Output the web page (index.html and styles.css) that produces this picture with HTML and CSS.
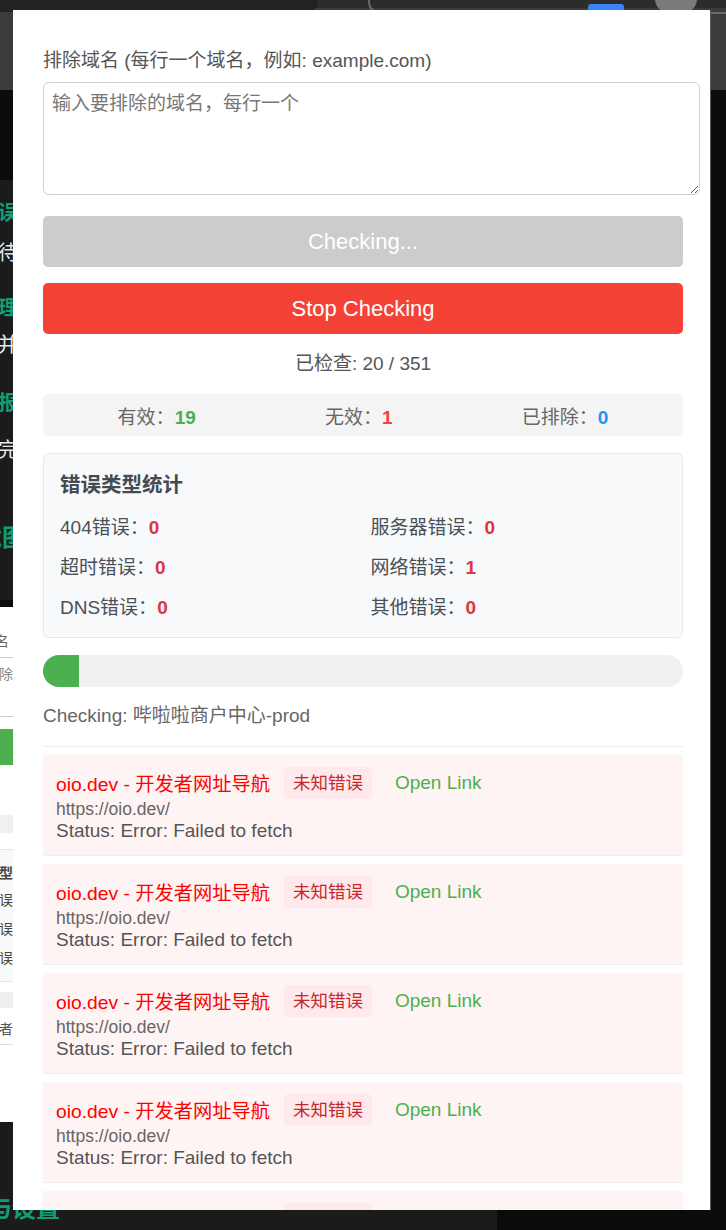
FILE: index.html
```html
<!DOCTYPE html>
<html lang="zh-CN">
<head>
<meta charset="utf-8">
<title>Link Checker</title>
<link rel="stylesheet" href="styles.css">
</head>
<body>
<div class="desktop">
  <div class="chrome-top">
    <div class="tab-dark"></div>
    <div class="omnibox"><span class="omni-btn"></span></div>
    <div class="avatar"></div>
  </div>

  <div class="doc-behind">
    <div class="doc-line h green l1">错误类型</div>
    <div class="doc-line white l2">等待检查</div>
    <div class="doc-line h green l3">处理方式</div>
    <div class="doc-line white l4">，并且</div>
    <div class="doc-line h green l5">误报说明</div>
    <div class="doc-line white l6">。完成</div>
    <div class="doc-line h big green l7">截图</div>
  </div>

  <div class="panel-behind">
    <div class="pb-label">排除域名</div>
    <div class="pb-input">输入要排除</div>
    <div class="pb-btn"></div>
    <div class="pb-gap"></div>
    <div class="pb-bar"></div>
    <div class="pb-box">
      <div class="pb-title">错误类型</div>
      <div class="pb-row">404错误</div>
      <div class="pb-row">超时错误</div>
      <div class="pb-row">DNS错误</div>
    </div>
    <div class="pb-bar2"></div>
    <div class="pb-item">oio.dev - 开发者</div>
  </div>

  <div class="doc-bottom">
    <div class="doc-line h big green">与设置</div>
  </div>
  <div class="bottom-right"></div>

  <div class="popup">
    <label class="field-label">排除域名 (每行一个域名，例如: example.com)</label>
    <textarea class="exclude-input" placeholder="输入要排除的域名，每行一个"></textarea>

    <button class="btn btn-disabled">Checking...</button>
    <button class="btn btn-stop">Stop Checking</button>

    <div class="progress-count">已检查: 20 / 351</div>

    <div class="summary">
      <div class="summary-item">有效：<span class="num num-valid">19</span></div>
      <div class="summary-item">无效：<span class="num num-invalid">1</span></div>
      <div class="summary-item">已排除：<span class="num num-excluded">0</span></div>
    </div>

    <div class="error-stats">
      <div class="error-title">错误类型统计</div>
      <div class="error-grid">
        <div class="error-cell">404错误：<span class="err-num">0</span></div>
        <div class="error-cell">服务器错误：<span class="err-num">0</span></div>
        <div class="error-cell">超时错误：<span class="err-num">0</span></div>
        <div class="error-cell">网络错误：<span class="err-num">1</span></div>
        <div class="error-cell">DNS错误：<span class="err-num">0</span></div>
        <div class="error-cell">其他错误：<span class="err-num">0</span></div>
      </div>
    </div>

    <div class="progress-track"><div class="progress-fill" style="width:36px"></div></div>

    <div class="current">Checking: 哔啦啦商户中心-prod</div>

    <div class="results">
      <div class="result-item">
        <div class="result-head">
          <span class="result-title">oio.dev - 开发者网址导航</span>
          <span class="badge">未知错误</span>
          <a class="open-link" href="#">Open Link</a>
        </div>
        <div class="result-url">https://oio.dev/</div>
        <div class="result-status">Status: Error: Failed to fetch</div>
      </div>
      <div class="result-item">
        <div class="result-head">
          <span class="result-title">oio.dev - 开发者网址导航</span>
          <span class="badge">未知错误</span>
          <a class="open-link" href="#">Open Link</a>
        </div>
        <div class="result-url">https://oio.dev/</div>
        <div class="result-status">Status: Error: Failed to fetch</div>
      </div>
      <div class="result-item">
        <div class="result-head">
          <span class="result-title">oio.dev - 开发者网址导航</span>
          <span class="badge">未知错误</span>
          <a class="open-link" href="#">Open Link</a>
        </div>
        <div class="result-url">https://oio.dev/</div>
        <div class="result-status">Status: Error: Failed to fetch</div>
      </div>
      <div class="result-item">
        <div class="result-head">
          <span class="result-title">oio.dev - 开发者网址导航</span>
          <span class="badge">未知错误</span>
          <a class="open-link" href="#">Open Link</a>
        </div>
        <div class="result-url">https://oio.dev/</div>
        <div class="result-status">Status: Error: Failed to fetch</div>
      </div>
      <div class="result-item">
        <div class="result-head">
          <span class="result-title">oio.dev - 开发者网址导航</span>
          <span class="badge">未知错误</span>
          <a class="open-link" href="#">Open Link</a>
        </div>
        <div class="result-url">https://oio.dev/</div>
        <div class="result-status">Status: Error: Failed to fetch</div>
      </div>
    </div>
  </div>
</div>
</body>
</html>
```

FILE: styles.css
```css
* { box-sizing: border-box; }
html, body { margin: 0; padding: 0; }
body {
  width: 726px;
  height: 1230px;
  overflow: hidden;
  background: #0c0c0c;
  font-family: "Liberation Sans", "Noto Sans CJK SC", sans-serif;
}
.desktop {
  position: relative;
  width: 726px;
  height: 1230px;
  overflow: hidden;
}

/* ---- background browser chrome ---- */
.chrome-top {
  position: absolute;
  left: 0; top: 0;
  width: 726px;
  height: 90px;
  background: #3b3b3b;
  border-top: 8px solid #2c2c2c;
}
.tab-dark {
  position: absolute;
  left: 0; top: -8px;
  width: 318px; height: 12px;
  background: #222;
  border-bottom-right-radius: 10px;
}
.omnibox {
  position: absolute;
  left: 368px; top: -20px;
  width: 420px; height: 26px;
  border: 2px solid #6a6a6a;
  border-radius: 12px;
}
.omni-btn {
  position: absolute;
  left: 218px; top: 14px;
  width: 36px; height: 8px;
  background: #3b82f6;
  border-radius: 3px;
}
.avatar {
  position: absolute;
  left: 655px; top: -26px;
  width: 42px; height: 34px;
  border-radius: 50%;
  background: #7a7a7a;
}

.doc-behind {
  position: absolute;
  left: -22px; top: 180px;
  width: 320px; height: 420px;
  background: #1b1b1b;
  padding-top: 20px;
}
.doc-line {
  position: absolute;
  left: 0;
  white-space: nowrap;
  font-size: 20px;
  line-height: 26px;
  color: #e8e8e8;
}
.doc-line.h { font-weight: bold; }
.doc-line.big { font-size: 24px; }
.doc-line.green { color: #129d74; }
.l1 { top: 20px; }
.l2 { top: 60px; }
.l3 { top: 115px; }
.l4 { top: 152px; }
.l5 { top: 210px; }
.l6 { top: 257px; }
.l7 { top: 345px; }

.panel-behind {
  position: absolute;
  left: -200px; top: 607px;
  width: 213px; height: 515px;
  background: #fff;
  padding: 24px 0 0 10px;
  font-size: 14px;
  color: #666;
}
.pb-label { line-height: 20px; white-space: nowrap; text-align: right; padding-right: 4px; }
.pb-input {
  margin-top: 6px;
  height: 60px;
  border-top: 1px solid #ccc;
  border-bottom: 1px solid #ccc;
  white-space: nowrap;
  text-align: right;
  padding: 6px 0 0;
  line-height: 20px;
  color: #888;
}
.pb-btn { margin-top: 12px; height: 36px; background: #4caf50; }
.pb-gap { height: 50px; }
.pb-bar { height: 18px; background: #f0f0f0; }
.pb-box {
  margin-top: 16px;
  background: #f8f9fa;
  border-top: 1px solid #e5e5e5;
  border-bottom: 1px solid #e5e5e5;
  padding: 10px 0 8px;
  text-align: right;
  color: #444;
}
.pb-title { font-weight: bold; line-height: 26px; }
.pb-row { line-height: 29px; }
.pb-bar2 { margin-top: 10px; height: 16px; background: #eee; }
.pb-item {
  margin-top: 6px;
  line-height: 30px;
  border-bottom: 1px solid #ddd;
  white-space: nowrap;
  text-align: right;
  color: #555;
}

.doc-bottom {
  position: absolute;
  left: -12px; top: 1122px;
  width: 509px; height: 108px;
  background: #1b1b1b;
}
.doc-bottom .doc-line { top: 74px; left: 0; }
.bottom-right {
  position: absolute;
  left: 497px; top: 1150px;
  width: 229px; height: 80px;
  background: #0b0b0b;
}

/* ---- popup ---- */
.popup {
  position: absolute;
  left: 13px; top: 10px;
  width: 697px;
  height: 1200px;
  overflow: hidden;
  background: #fff;
  box-shadow: 1px 0 0 #5a5a5a;
  padding: 38px 27px 0 30px;
  color: #555;
  font-size: 19px;
}

.field-label {
  display: block;
  font-size: 19px;
  line-height: 26px;
  color: #555;
}
.exclude-input {
  display: block;
  margin-top: 8px;
  width: 657px;
  height: 113px;
  border: 1px solid #cfcfcf;
  border-radius: 6px;
  padding: 9px 8px;
  font-family: "Liberation Sans", "Noto Sans CJK SC", sans-serif;
  font-size: 19px;
  line-height: 24px;
  color: #333;
  background: #fff;
  resize: vertical;
}
.exclude-input::placeholder { color: #777; }

.btn {
  display: block;
  width: 100%;
  height: 51px;
  border: none;
  border-radius: 5px;
  color: #fff;
  font-family: "Liberation Sans", "Noto Sans CJK SC", sans-serif;
  font-size: 22px;
  padding: 0;
}
.btn-disabled { margin-top: 21px; background: #cccccc; }
.btn-stop { margin-top: 16px; background: #f44336; }

.progress-count {
  margin-top: 17px;
  text-align: center;
  line-height: 26px;
  color: #555;
}

.summary {
  margin-top: 17px;
  height: 42px;
  background: #f4f4f4;
  border-radius: 5px;
  display: flex;
  align-items: center;
  justify-content: space-around;
  padding: 0 10px;
  color: #666;
}
.num { font-weight: bold; }
.num-valid { color: #4caf50; }
.num-invalid { color: #f44336; }
.num-excluded { color: #2196f3; }

.error-stats {
  margin-top: 17px;
  background: #f8f9fa;
  border: 1px solid #e6e8eb;
  border-radius: 6px;
  padding: 18px 16px 16px;
  color: #495057;
}
.error-title {
  font-size: 20.5px;
  font-weight: bold;
  line-height: 26px;
  color: #444b52;
}
.error-grid {
  margin-top: 17px;
  display: grid;
  grid-template-columns: 1fr 1fr;
  column-gap: 15px;
  row-gap: 14px;
}
.error-cell { line-height: 26px; }
.err-num { color: #dc3545; font-weight: bold; }

.progress-track {
  margin-top: 17px;
  height: 32px;
  border-radius: 16px;
  background: #f0f0f0;
  overflow: hidden;
}
.progress-fill {
  height: 100%;
  background: #4caf50;
}

.current {
  margin-top: 16px;
  line-height: 26px;
  color: #666;
}

.results {
  margin-top: 17px;
  border-top: 1px solid #eeeeee;
  padding-top: 8px;
}
.result-item {
  background: #fff4f4;
  padding: 12px 13px;
  border-bottom: 1px solid #eeeeee;
  margin-bottom: 8px;
}
.result-head {
  display: flex;
  align-items: center;
  height: 32px;
}
.result-title {
  font-size: 19.25px;
  color: #ff0000;
  white-space: nowrap;
}
.badge {
  margin-left: 14px;
  height: 32px;
  line-height: 32px;
  padding: 0 9px;
  border-radius: 4px;
  background: #ffe9ec;
  color: #c62828;
  font-size: 17.5px;
}
.open-link {
  margin-left: 23px;
  color: #4caf50;
  text-decoration: none;
  font-size: 19px;
}
.result-url {
  font-size: 17.5px;
  line-height: 20px;
  color: #666;
}
.result-status {
  font-size: 19px;
  line-height: 24px;
  color: #555;
}
```
